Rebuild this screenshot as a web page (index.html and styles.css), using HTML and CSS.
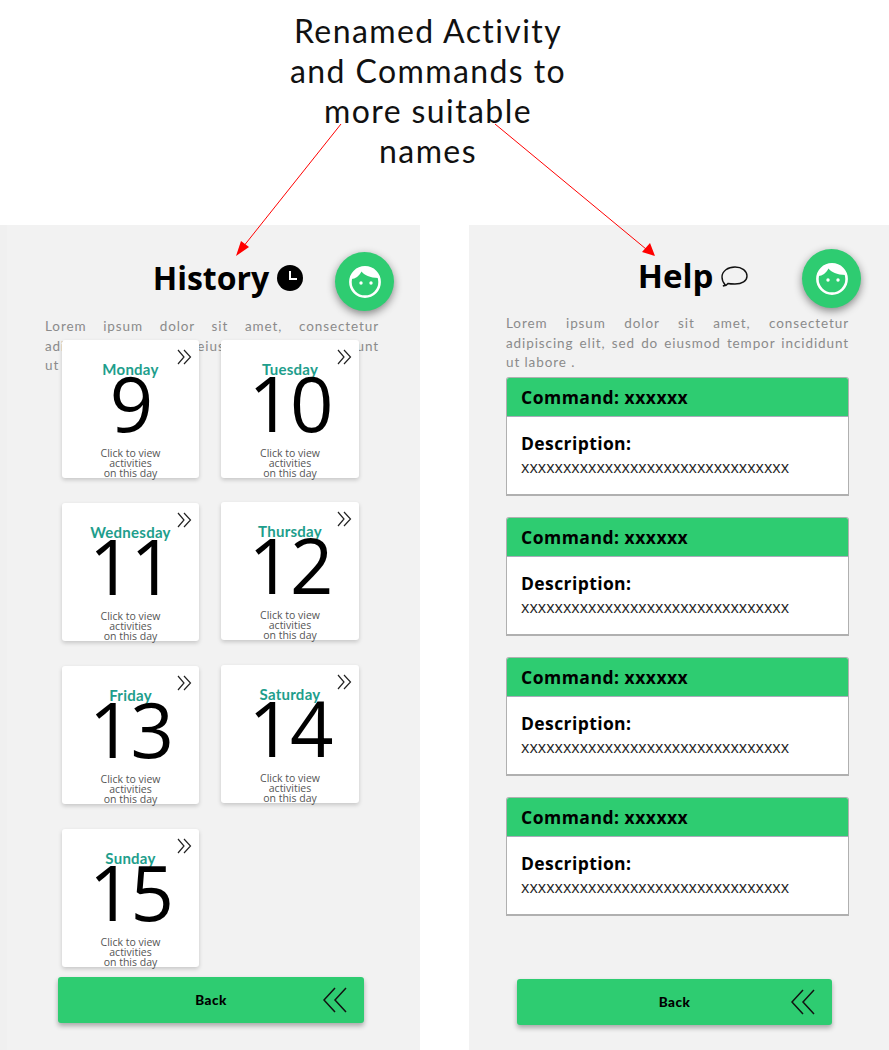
FILE: index.html
```html
<!DOCTYPE html>
<html lang="en">
<head>
<meta charset="utf-8">
<title>History and Help</title>
<link rel="stylesheet" href="styles.css">
</head>
<body>
<div class="slide">
  <p class="note">Renamed Activity<br>and Commands to<br>more suitable<br>names</p>
  <div class="screens">
    <section class="screen history">
      <span class="avatar"><svg viewBox="0 0 32 32" width="32" height="32"><circle cx="16" cy="16" r="14.600" fill="none" stroke="#fff" stroke-width="2.600"/><path d="M2.500 13C6 13 10.500 10 12.500 5.500C15 9 21 12 29.500 12C28 5 22 1.500 16 1.500C9 1.500 3.500 6 2.500 13Z" fill="#fff"/><circle cx="12" cy="17" r="1.700" fill="#fff"/><circle cx="22" cy="17" r="1.700" fill="#fff"/></svg></span>
      <h1 class="title">History <svg class="title-icon" viewBox="0 0 26 26" width="26" height="26"><circle cx="13" cy="13" r="13" fill="#000"/><path d="M13 6V14H20" fill="none" stroke="#fff" stroke-width="2"/></svg></h1>
      <p class="lorem">Lorem ipsum dolor sit amet, consectetur adipiscing elit, sed do eiusmod tempor incididunt ut labore .</p>
      <div class="days">
        <article class="day"><svg class="more" viewBox="0 0 15 16" width="15" height="16"><path d="M1 1L7 8L1 15M7 1L13.500 8L7 15" fill="none" stroke="#222" stroke-width="1.200"/></svg><h2>Monday</h2><strong>9</strong><p>Click to view<br>activities<br>on this day</p></article>
        <article class="day"><svg class="more" viewBox="0 0 15 16" width="15" height="16"><path d="M1 1L7 8L1 15M7 1L13.500 8L7 15" fill="none" stroke="#222" stroke-width="1.200"/></svg><h2>Tuesday</h2><strong>10</strong><p>Click to view<br>activities<br>on this day</p></article>
        <article class="day"><svg class="more" viewBox="0 0 15 16" width="15" height="16"><path d="M1 1L7 8L1 15M7 1L13.500 8L7 15" fill="none" stroke="#222" stroke-width="1.200"/></svg><h2>Wednesday</h2><strong>11</strong><p>Click to view<br>activities<br>on this day</p></article>
        <article class="day day-raised"><svg class="more" viewBox="0 0 15 16" width="15" height="16"><path d="M1 1L7 8L1 15M7 1L13.500 8L7 15" fill="none" stroke="#222" stroke-width="1.200"/></svg><h2>Thursday</h2><strong>12</strong><p>Click to view<br>activities<br>on this day</p></article>
        <article class="day"><svg class="more" viewBox="0 0 15 16" width="15" height="16"><path d="M1 1L7 8L1 15M7 1L13.500 8L7 15" fill="none" stroke="#222" stroke-width="1.200"/></svg><h2>Friday</h2><strong>13</strong><p>Click to view<br>activities<br>on this day</p></article>
        <article class="day day-raised"><svg class="more" viewBox="0 0 15 16" width="15" height="16"><path d="M1 1L7 8L1 15M7 1L13.500 8L7 15" fill="none" stroke="#222" stroke-width="1.200"/></svg><h2>Saturday</h2><strong>14</strong><p>Click to view<br>activities<br>on this day</p></article>
        <article class="day"><svg class="more" viewBox="0 0 15 16" width="15" height="16"><path d="M1 1L7 8L1 15M7 1L13.500 8L7 15" fill="none" stroke="#222" stroke-width="1.200"/></svg><h2>Sunday</h2><strong>15</strong><p>Click to view<br>activities<br>on this day</p></article>
      </div>
      <button class="back back-history">Back<svg class="back-icon" viewBox="0 0 24 26" width="24" height="26"><path d="M12 1L1 13L12 25M23 1L12 13L23 25" fill="none" stroke="#111" stroke-width="1.500"/></svg></button>
    </section>
    <section class="screen help">
      <span class="avatar"><svg viewBox="0 0 32 32" width="32" height="32"><circle cx="16" cy="16" r="14.600" fill="none" stroke="#fff" stroke-width="2.600"/><path d="M2.500 13C6 13 10.500 10 12.500 5.500C15 9 21 12 29.500 12C28 5 22 1.500 16 1.500C9 1.500 3.500 6 2.500 13Z" fill="#fff"/><circle cx="12" cy="17" r="1.700" fill="#fff"/><circle cx="22" cy="17" r="1.700" fill="#fff"/></svg></span>
      <h1 class="title">Help <svg class="title-icon" viewBox="0 0 27 23" width="27" height="23"><path d="M4 19.500C2 17.500 1 15 1 12C1 6 7 2 14 2C21 2 26 6 26 11C26 16 21 19 14 19C11 19 9 19 7 18.500C6 20 4 21 2 21C3 20.500 4 20 4 19.500Z" fill="none" stroke="#111" stroke-width="1.400"/></svg></h1>
      <p class="lorem">Lorem ipsum dolor sit amet, consectetur adipiscing elit, sed do eiusmod tempor incididunt ut labore .</p>
      <div class="commands">
        <article class="command"><h2>Command: xxxxxx</h2><div class="command-body"><h3>Description:</h3><p>xxxxxxxxxxxxxxxxxxxxxxxxxxxxxxxx</p></div></article>
        <article class="command"><h2>Command: xxxxxx</h2><div class="command-body"><h3>Description:</h3><p>xxxxxxxxxxxxxxxxxxxxxxxxxxxxxxxx</p></div></article>
        <article class="command"><h2>Command: xxxxxx</h2><div class="command-body"><h3>Description:</h3><p>xxxxxxxxxxxxxxxxxxxxxxxxxxxxxxxx</p></div></article>
        <article class="command"><h2>Command: xxxxxx</h2><div class="command-body"><h3>Description:</h3><p>xxxxxxxxxxxxxxxxxxxxxxxxxxxxxxxx</p></div></article>
      </div>
      <button class="back back-help">Back<svg class="back-icon" viewBox="0 0 24 26" width="24" height="26"><path d="M12 1L1 13L12 25M23 1L12 13L23 25" fill="none" stroke="#111" stroke-width="1.500"/></svg></button>
    </section>
  </div>
  <svg class="arrows" viewBox="0 0 889 1050" width="889" height="1050">
    <path d="M341 124L243 247M495 124L646 249" stroke="#f00" stroke-width="1" fill="none"/>
    <path d="M236 256L249 247L241 241ZM655 256L650 243L642 252Z" fill="#f00"/>
  </svg>
</div>
</body>
</html>
```
FILE: styles.css
```css
* { box-sizing: border-box; }
html, body { margin: 0; padding: 0; background: #fff; }
body { font-family: "Open Sans", "Noto Sans", sans-serif; color: #000; }
.slide { position: relative; width: 889px; height: 1050px; overflow: hidden; }
.note {
  margin: 0;
  height: 225px;
  padding-top: 11px;
  text-align: center;
  width: 856px;
  font-family: "Lato", sans-serif;
  font-size: 32px;
  line-height: 40px;
  letter-spacing: 1.4px;
  color: #111;
}
.screens { display: flex; justify-content: space-between; height: 825px; }
.screen { position: relative; width: 420px; height: 825px; background: #f2f2f2; }
.history { border-left: 7px solid #f0f0f0; padding: 0 41px 0 38px; }
.help { padding: 0 40px 0 37px; }
.avatar {
  position: absolute;
  display: flex; align-items: center; justify-content: center;
  width: 59px; height: 59px;
  border-radius: 50%;
  background: #2ecc71;
  box-shadow: 0 3px 8px rgba(0,0,0,.45);
}
.history .avatar { top: 27px; left: 328px; }
.help .avatar { top: 24px; left: 333px; }
.title {
  margin: 0;
  display: flex; align-items: center; justify-content: center; gap: 8px;
  font-size: 32px; line-height: 44px; font-weight: 700;
}
.history .title { padding: 31px 0 0 32px; height: 75px; }
.help .title { padding: 29px 0 0 31px; height: 73px; font-size: 33px; }
.lorem {
  margin: 0;
  font-family: "Lato", sans-serif;
  font-size: 13.500px;
  line-height: 19.500px;
  color: #8b8b8b;
  text-align: justify;
  letter-spacing: .9px;
}
.history .lorem { position: relative; margin-top: 17px; }
.help .lorem { margin-top: 16px; width: 343px; }
.days {
  position: absolute;
  top: 115px; left: 55px;
  display: grid;
  grid-template-columns: 137px 138px;
  column-gap: 22px;
  row-gap: 25px;
}
.day {
  position: relative;
  height: 138px;
  background: #fff;
  border-radius: 3px;
  box-shadow: 0 2px 4px rgba(0,0,0,.18);
  text-align: center;
  padding-top: 20px;
}
.day-raised { margin-top: -1px; }
.more { position: absolute; top: 9px; right: 7px; }
.day h2 {
  margin: 0;
  font-family: "Lato", sans-serif;
  font-size: 15px; line-height: 18px; font-weight: 700;
  letter-spacing: .25px;
  color: #1e9e8c;
}
.day strong {
  display: block;
  margin-top: -11px;
  font-size: 76px; line-height: 72px; font-weight: 400;
  letter-spacing: -2px;
}
.day p {
  margin: 9px 0 0;
  font-size: 10.500px; line-height: 10px;
  color: #555;
}
.back {
  position: absolute;
  display: block;
  height: 46px;
  border: 0;
  border-radius: 3px;
  background: #2ecc71;
  box-shadow: 0 3px 5px rgba(0,0,0,.3);
  font-family: "Lato", sans-serif;
  font-size: 13.500px; font-weight: 900;
  letter-spacing: .5px;
  color: #000;
  text-align: center;
  padding: 0;
}
.back-history { top: 752px; left: 51px; width: 306px; }
.back-help { top: 754px; left: 48px; width: 315px; }
.back-icon { position: absolute; right: 17px; top: 10px; }
.commands { display: flex; flex-direction: column; gap: 21px; margin-top: 4px; width: 343px; }
.command { height: 119px; background: #fff; border: 1px solid #b0b0b0; border-bottom-width: 2px; border-radius: 3px 3px 0 0; overflow: hidden; }
.command h2 {
  margin: 0;
  height: 39px;
  padding: 0 14px;
  background: #2ecc71;
  border-bottom: 1px solid #aab;
  font-size: 17.500px; line-height: 39px; font-weight: 700;
  letter-spacing: .5px;
}
.command-body { padding: 14px 14px 0; }
.command h3 { margin: 0; font-size: 17.500px; line-height: 24px; font-weight: 700; letter-spacing: .4px; }
.command p { margin: 2px 0 0; font-size: 16px; line-height: 20px; color: #222; }
.arrows { position: absolute; left: 0; top: 0; pointer-events: none; }
```
